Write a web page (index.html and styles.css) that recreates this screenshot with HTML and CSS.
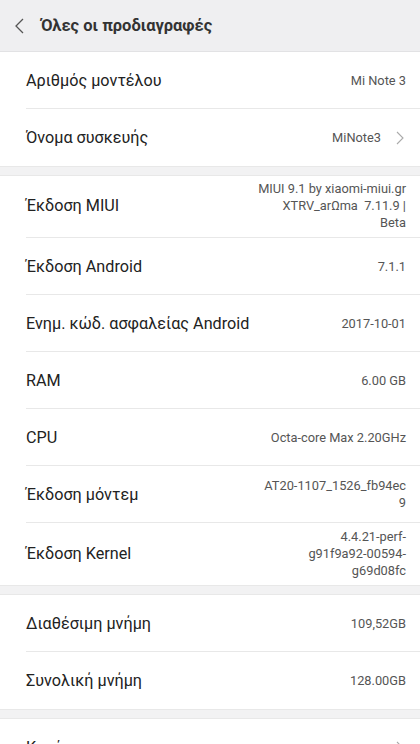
FILE: index.html
```html
<!DOCTYPE html>
<html>
<head>
    <title>Όλες οι προδιαγραφές</title>
    <link rel="stylesheet" href="styles.css">
</head>
<body>
    <div class="header">
        <svg class="back" width="12" height="16" viewBox="0 0 12 16"><polyline points="9,1 2,8 9,15" fill="none" stroke="#555" stroke-width="1.3"/></svg>
        <h1>Όλες οι προδιαγραφές</h1>
    </div>

    <div class="section">
        <div class="row">
            <div class="label">Αριθμός μοντέλου</div>
            <div class="value">Mi Note 3</div>
        </div>
        <div class="row">
            <div class="label">Όνομα συσκευής</div>
            <div class="value">MiNote3</div>
            <svg class="chev" width="8" height="14" viewBox="0 0 8 14"><polyline points="1,1 7,7 1,13" fill="none" stroke="#aaa" stroke-width="1.1"/></svg>
        </div>
    </div>

    <div class="section">
        <div class="row tall">
            <div class="label">Έκδοση MIUI</div>
            <div class="value">MIUI 9.1 by xiaomi-miui.gr XTRV_arΩma&nbsp; 7.11.9 | Beta</div>
        </div>
        <div class="row">
            <div class="label">Έκδοση Android</div>
            <div class="value">7.1.1</div>
        </div>
        <div class="row">
            <div class="label">Ενημ. κώδ. ασφαλείας Android</div>
            <div class="value">2017-10-01</div>
        </div>
        <div class="row">
            <div class="label">RAM</div>
            <div class="value">6.00 GB</div>
        </div>
        <div class="row">
            <div class="label">CPU</div>
            <div class="value">Octa-core Max 2.20GHz</div>
        </div>
        <div class="row">
            <div class="label">Έκδοση μόντεμ</div>
            <div class="value">AT20-1107_1526_fb94ec<br>9</div>
        </div>
        <div class="row tall">
            <div class="label">Έκδοση Kernel</div>
            <div class="value">4.4.21-perf-<br>g91f9a92-00594-<br>g69d08fc</div>
        </div>
    </div>

    <div class="section">
        <div class="row">
            <div class="label">Διαθέσιμη μνήμη</div>
            <div class="value">109,52GB</div>
        </div>
        <div class="row">
            <div class="label">Συνολική μνήμη</div>
            <div class="value">128.00GB</div>
        </div>
    </div>

    <div class="section">
        <div class="row">
            <div class="label">Κατάσταση</div>
            <div class="value"></div>
            <svg class="chev" width="8" height="14" viewBox="0 0 8 14"><polyline points="1,1 7,7 1,13" fill="none" stroke="#aaa" stroke-width="1.1"/></svg>
        </div>
    </div>
</body>
</html>
```

FILE: styles.css
```css
html {
    overflow: hidden;
}
body {
    margin: 0;
    font-family: Roboto, "Noto Sans", sans-serif;
    background-color: #f2f2f3;
    height: 744px;
    overflow: hidden;
}
.header {
    height: 51px;
    background: #efeff1;
    border-bottom: 1px solid #e2e2e4;
    display: flex;
    align-items: center;
    padding-left: 14px;
}
.back {
    margin-right: 15px;
}
h1 {
    margin: 0;
    font-size: 16.5px;
    font-weight: bold;
    color: #333;
}
.section {
    background: white;
    padding-left: 26px;
    margin-bottom: 8px;
    border-bottom: 1px solid #e8e8e8;
}
.section + .section {
    border-top: 1px solid #e8e8e8;
}
.row {
    min-height: 57px;
    display: flex;
    align-items: center;
    padding-right: 14px;
    border-bottom: 1px solid #e8e8e8;
    box-sizing: border-box;
}
.row:last-child {
    border-bottom: none;
}
.row.tall {
    min-height: 62px;
    padding-top: 4px;
    padding-bottom: 6px;
}
.label {
    flex: 1;
    font-size: 16.2px;
    color: #222;
}
.value {
    max-width: 149px;
    text-align: right;
    font-size: 12.8px;
    line-height: 17px;
    color: #555;
}
.chev {
    margin-left: 15px;
    margin-right: 2px;
}
```
